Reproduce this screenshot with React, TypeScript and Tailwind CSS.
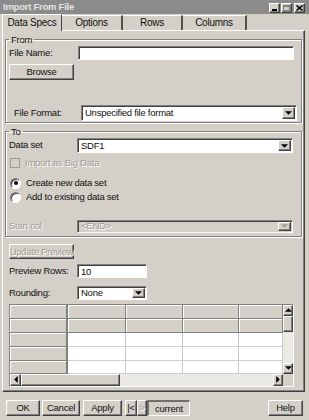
import React from 'react';

const sunken =
  'border border-t-[#808080] border-l-[#808080] border-b-white border-r-white shadow-[inset_1px_1px_0_#404040]';
const raised =
  'border border-t-white border-l-white border-b-[#404040] border-r-[#404040] shadow-[inset_-1px_-1px_0_#808080]';
const dim = 'text-[#a09c94] [text-shadow:1px_1px_0_#ffffff]';

const Tri = ({ dir = 'down', off = false }: { dir?: 'down' | 'up' | 'left' | 'right'; off?: boolean }) => {
  const pts = {
    down: '0,0 6,0 3,3',
    up: '0,3 6,3 3,0',
    left: '3,0 3,6 0,3',
    right: '0,0 0,6 3,3',
  }[dir];
  const w = dir === 'down' || dir === 'up' ? 7 : 4;
  const h = dir === 'down' || dir === 'up' ? 4 : 7;
  return (
    <svg width={w} height={h} viewBox={`0 0 ${w - 1} ${h - 1}`}>
      <polygon points={pts} fill={off ? '#a09c94' : '#000'} />
    </svg>
  );
};

const Select = ({ value, w, h, off = false }: { value: string; w: string; h: string; off?: boolean }) => (
  <div className={`${sunken} ${w} ${h} flex items-center ${off ? 'bg-[#d4d0c8]' : 'bg-white'}`}>
    <span className={`flex-1 pl-[3px] leading-none ${off ? dim : ''}`}>{value}</span>
    <div className="h-full py-[1px] pr-[1px]">
      <div className={`${raised} bg-[#d4d0c8] w-[13px] h-full flex items-center justify-center`}>
        <Tri off={off} />
      </div>
    </div>
  </div>
);

const Btn = ({ label, w, off = false }: { label: string; w: string; off?: boolean }) => (
  <div className={`${raised} bg-[#d4d0c8] ${w} h-[16px] flex items-center justify-center leading-none ${off ? dim : ''}`}>
    {label}
  </div>
);

const Radio = ({ on }: { on: boolean }) => (
  <div className="w-[11px] h-[11px] rounded-full border border-t-[#808080] border-l-[#808080] border-b-white border-r-white bg-white shadow-[inset_1px_1px_0_#404040] flex items-center justify-center">
    {on && <div className="w-[4px] h-[4px] rounded-full bg-black" />}
  </div>
);

const cols = ['w-[58px]', 'w-[58px]', 'w-[57px]', 'w-[56px]', 'w-[44px]'];
const rowH = ['h-[14px]', 'h-[14px]', 'h-[14px]', 'h-[14px]', 'h-[13px]'];

const Grid = () => (
  <div className={`${sunken} ml-[6px] mt-[4px] w-[285px] h-[83px] flex flex-col bg-[#d4d0c8]`}>
    <div className="flex">
      <div className="flex flex-col">
        {rowH.map((h, r) => (
          <div key={r} className={`flex ${h}`}>
            {cols.map((w, c) => {
              const head = r < 2 || c === 0;
              return (
                <div
                  key={c}
                  className={`${w} h-full border-b ${
                    head
                      ? 'bg-[#d4d0c8] border-b-[#808080] border-r border-r-[#808080] shadow-[inset_1px_1px_0_#ffffff]'
                      : 'bg-white border-b-[#d0d0d0] border-r border-r-[#c8c8c8]'
                  } ${c === 0 ? 'border-r-2 border-r-[#707070]' : ''}`}
                />
              );
            })}
          </div>
        ))}
      </div>
      <div className="w-[10px] flex flex-col bg-[#ebe9e4]">
        <div className={`${raised} bg-[#d4d0c8] h-[11px] flex items-center justify-center`}>
          <Tri dir="up" />
        </div>
        <div className={`${raised} bg-[#d4d0c8] h-[16px]`} />
        <div className="flex-1" />
        <div className={`${raised} bg-[#d4d0c8] h-[11px] flex items-center justify-center`}>
          <Tri />
        </div>
      </div>
    </div>
    <div className="flex h-[12px]">
      <div className="flex flex-1 bg-[#ebe9e4]">
        <div className={`${raised} bg-[#d4d0c8] w-[11px] flex items-center justify-center`}>
          <Tri dir="left" />
        </div>
        <div className={`${raised} bg-[#d4d0c8] w-[99px]`} />
        <div className="flex-1" />
        <div className={`${raised} bg-[#d4d0c8] w-[10px] flex items-center justify-center`}>
          <Tri dir="right" />
        </div>
      </div>
      <div className="w-[10px] bg-[#d4d0c8]" />
    </div>
  </div>
);

const tabs = [
  { label: 'Data Specs', w: 'w-[60px]' },
  { label: 'Options', w: 'w-[61px]' },
  { label: 'Rows', w: 'w-[60px]' },
  { label: 'Columns', w: 'w-[64px]' },
];

export default function App() {
  return (
    <div className="w-[309px] h-[420px] bg-[#d4d0c8] text-[#101010] text-[9.5px] tracking-[-0.25px] font-['Liberation_Sans',Arial,sans-serif] flex flex-col overflow-hidden whitespace-nowrap">
      {/* title */}
      <div className="h-[14px] bg-[#8b8b8b] flex items-center justify-between pl-[3px] pr-[4px]">
        <span className="font-bold text-[#e4e4e4] leading-none">Import From File</span>
        <div className="flex gap-[1px] mt-[2px]">
          <div className={`${raised} bg-[#d4d0c8] w-[11px] h-[10px] flex items-end justify-center pb-[1px]`}>
            <div className="w-[5px] h-[2px] bg-black" />
          </div>
          <div className={`${raised} bg-[#d4d0c8] w-[11px] h-[10px] flex items-center justify-center mr-[1px]`}>
            <div className="w-[7px] h-[6px] border border-[#808080] border-t-2" />
          </div>
          <div className={`${raised} bg-[#d4d0c8] w-[11px] h-[10px] flex items-center justify-center`}>
            <svg width="7" height="6" viewBox="0 0 7 6">
              <path d="M0.5 0.5 L6.5 5.5 M6.5 0.5 L0.5 5.5" stroke="#000" strokeWidth="1.6" />
            </svg>
          </div>
        </div>
      </div>

      {/* tabs */}
      <div className="h-[16px] flex items-end pl-[2px]">
        {tabs.map((t, i) =>
          i === 0 ? (
            <div
              key={t.label}
              className={`${t.w} relative z-10 h-[17px] -mb-[1px] bg-[#d4d0c8] border-t border-l border-white border-r border-r-[#404040] flex items-center justify-center leading-none text-[10px]`}
            >
              {t.label}
            </div>
          ) : (
            <div
              key={t.label}
              className={`${t.w} h-[15px] border-t border-t-white border-r-2 border-r-[#505050] flex items-center justify-center leading-none text-[10px]`}
            >
              {t.label}
            </div>
          )
        )}
      </div>

      {/* panel */}
      <div className="mx-[2px] w-[303px] border border-t-white border-l-white border-b-[#404040] border-r-[#404040] shadow-[inset_-1px_-1px_0_#808080] pb-[4px]">
        <fieldset className="mx-[2px] mt-[2px] border border-[#808080] shadow-[1px_1px_0_#ffffff,inset_1px_1px_0_#ffffff] pb-[1px]">
          <legend className="ml-[3px] px-[2px] leading-[13px]">From</legend>
          <div className="flex items-center h-[14px] pl-[3px]">
            <span className="w-[69px]">File Name:</span>
            <div className={`${sunken} bg-white w-[216px] h-[14px]`} />
          </div>
          <div className="pl-[3px] mt-[4px]">
            <Btn label="Browse" w="w-[65px]" />
          </div>
          <div className="flex items-center mt-[25px] pl-[8px]">
            <span className="w-[67px]">File Format:</span>
            <Select value="Unspecified file format" w="w-[216px]" h="h-[16px]" />
          </div>
        </fieldset>

        <fieldset className="mx-[2px] mt-[2px] border border-[#808080] shadow-[1px_1px_0_#ffffff,inset_1px_1px_0_#ffffff] pb-[3px]">
          <legend className="ml-[3px] px-[2px] leading-[13px]">To</legend>
          <div className="flex items-center pl-[3px]">
            <span className="w-[68px]">Data set</span>
            <Select value="SDF1" w="w-[216px]" h="h-[15px]" />
          </div>
          <div className="flex items-center h-[12px] mt-[4px] pl-[4px] gap-[5px]">
            <div className="w-[10px] h-[10px] border border-[#a09c94] bg-[#d4d0c8]" />
            <span className={dim}>Import as Big Data</span>
          </div>
          <div className="flex items-center h-[14px] mt-[7px] pl-[4px] gap-[5px]">
            <Radio on />
            <span>Create new data set</span>
          </div>
          <div className="flex items-center h-[14px] pl-[4px] gap-[5px]">
            <Radio on={false} />
            <span>Add to existing data set</span>
          </div>
          <div className="flex items-center mt-[15px] pl-[3px]">
            <span className={`w-[68px] ${dim}`}>Start col</span>
            <Select value="<END>" w="w-[216px]" h="h-[13px]" off />
          </div>
        </fieldset>

        <div className="ml-[6px] mt-[7px]">
          <div className={`${raised} bg-[#d4d0c8] w-[65px] h-[15px] flex items-center justify-center leading-none ${dim}`}>
            Update Preview
          </div>
        </div>
        <div className="flex items-center ml-[6px] mt-[5px]">
          <span className="w-[68px]">Preview Rows:</span>
          <div className={`${sunken} bg-white w-[70px] h-[14px] flex items-center pl-[3px] leading-none`}>10</div>
        </div>
        <div className="flex items-center ml-[6px] mt-[7px]">
          <span className="w-[68px]">Rounding:</span>
          <Select value="None" w="w-[70px]" h="h-[14px]" />
        </div>
        <Grid />
      </div>

      {/* buttons */}
      <div className="flex items-center mt-[8px] px-[6px]">
        <div className="flex items-center">
          <Btn label="OK" w="w-[34px]" />
          <div className="ml-[2px]"><Btn label="Cancel" w="w-[38px]" /></div>
          <div className="ml-[3px]"><Btn label="Apply" w="w-[39px]" /></div>
          <div className={`ml-[3px] ${raised} bg-[#d4d0c8] w-[12px] h-[16px] flex items-center justify-center leading-none`}>|&lt;</div>
          <div className={`${raised} bg-[#d4d0c8] w-[10px] h-[16px] flex items-center justify-center leading-none ${dim}`}>&gt;</div>
          <div className="border-t-2 border-l-2 border-[#707070] border-r border-b border-r-white border-b-white bg-[#d4d0c8] w-[43px] h-[16px] flex items-center justify-center leading-none">
            current
          </div>
        </div>
        <div className="flex-1" />
        <Btn label="Help" w="w-[35px]" />
      </div>
    </div>
  );
}
